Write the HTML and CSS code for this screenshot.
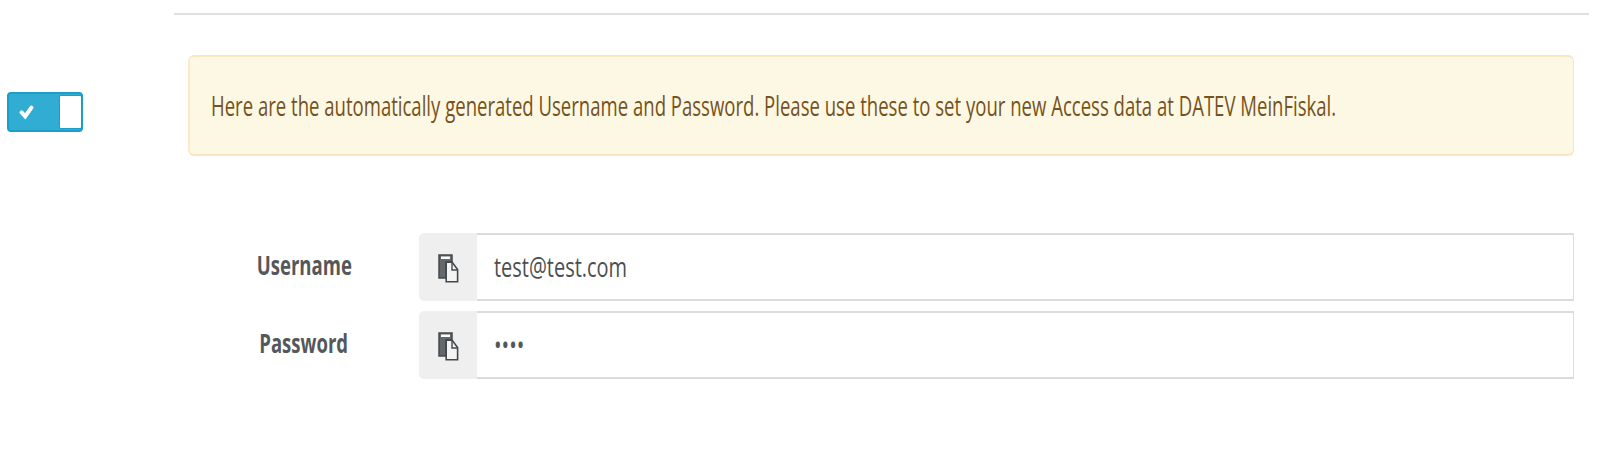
FILE: index.html
```html
<!DOCTYPE html>
<html lang="en">
<head>
<meta charset="utf-8">
<title>Access data</title>
<link rel="stylesheet" href="styles.css">
</head>
<body>
<div class="page">
  <aside class="side">
    <div class="toggle" role="switch" aria-checked="true">
      <svg class="check" width="16" height="17" viewBox="0 0 16 17"><path d="M2.6 8.4 L6.2 12.4 L12.4 3.6" fill="none" stroke="#fff" stroke-width="4" stroke-linecap="round"/></svg>
      <span class="knob"></span>
    </div>
  </aside>
  <main class="main">
    <div class="alert"><span class="text message">Here are the automatically generated Username and Password. Please use these to set your new Access data at DATEV MeinFiskal.</span></div>
    <div class="row">
      <div class="label"><span class="text name">Username</span></div>
      <div class="group">
        <div class="addon"><svg width="22" height="30" viewBox="0 0 22 30"><path d="M1 1H14V8H8V24H1Z" fill="#65686b" stroke="#46494c" stroke-width="1.5"/><path d="M3 2.5H12V5H3Z" fill="#fff"/><path d="M8.2 8.2H14.2L19.6 15.5V27.8H8.2Z" fill="#f4f4f4" stroke="#46494c" stroke-width="1.6"/><path d="M14 8V16H20" fill="none" stroke="#46494c" stroke-width="1.4"/></svg></div>
        <div class="field"><span class="text value">test@test.com</span></div>
      </div>
    </div>
    <div class="row">
      <div class="label"><span class="text name">Password</span></div>
      <div class="group">
        <div class="addon"><svg width="22" height="30" viewBox="0 0 22 30"><path d="M1 1H14V8H8V24H1Z" fill="#65686b" stroke="#46494c" stroke-width="1.5"/><path d="M3 2.5H12V5H3Z" fill="#fff"/><path d="M8.2 8.2H14.2L19.6 15.5V27.8H8.2Z" fill="#f4f4f4" stroke="#46494c" stroke-width="1.6"/><path d="M14 8V16H20" fill="none" stroke="#46494c" stroke-width="1.4"/></svg></div>
        <div class="field"><span class="text dots">••••</span></div>
      </div>
    </div>
  </main>
</div>
</body>
</html>
```
FILE: styles.css
```css
* { box-sizing: border-box; }
body { margin: 0; background: #fff; font-family: "Open Sans", sans-serif; font-size: 27px; color: #55585b; }
.page { display: flex; height: 463px; padding-top: 13px; overflow: hidden; }
.side { width: 174px; padding: 79px 0 0 7px; }
.toggle { display: flex; align-items: center; justify-content: space-between; width: 76px; height: 40px; padding: 0 0 0 10px; background: #31acd2; border: 2px solid #1b9fc9; border-radius: 4px; }
.knob { width: 21px; height: 32px; background: #fff; border-radius: 1px; box-shadow: 0 0 0 1px #1b9fc9; }
.main { width: 1415px; padding: 40px 15px 0 14px; border-top: 2px solid #dee1e4; }
.alert { display: flex; align-items: center; height: 101px; margin-bottom: 77px; padding-left: 21px; background: #fdf8e3; border: 2px solid #f9e6c0; border-left-color: #fbebcb; border-right-width: 1px; border-radius: 6px; color: #765220; }
.row { display: flex; height: 68px; margin-bottom: 10px; }
.label { display: flex; justify-content: center; align-items: center; width: 231px; padding: 0 0 5px 1px; font-weight: 700; }
.group { display: flex; flex: 1; }
.addon { display: flex; align-items: center; justify-content: center; width: 58px; padding: 3px 0 0 1px; background: #efefef; border-radius: 5px 0 0 5px; }
.addon svg { display: block; }
.field { display: flex; align-items: center; flex: 1; padding: 0 0 2px 16.5px; border: 2px solid #dcdcdc; border-left: 0; border-right-width: 1.5px; }
.text { white-space: nowrap; transform-origin: left center; }
.message { transform: scaleX(.687); }
.name { transform: scaleX(.687); transform-origin: center; }
.value { color: #4c4f52; transform: scaleX(.739); }
.dots { transform: scaleX(.75); }
```
